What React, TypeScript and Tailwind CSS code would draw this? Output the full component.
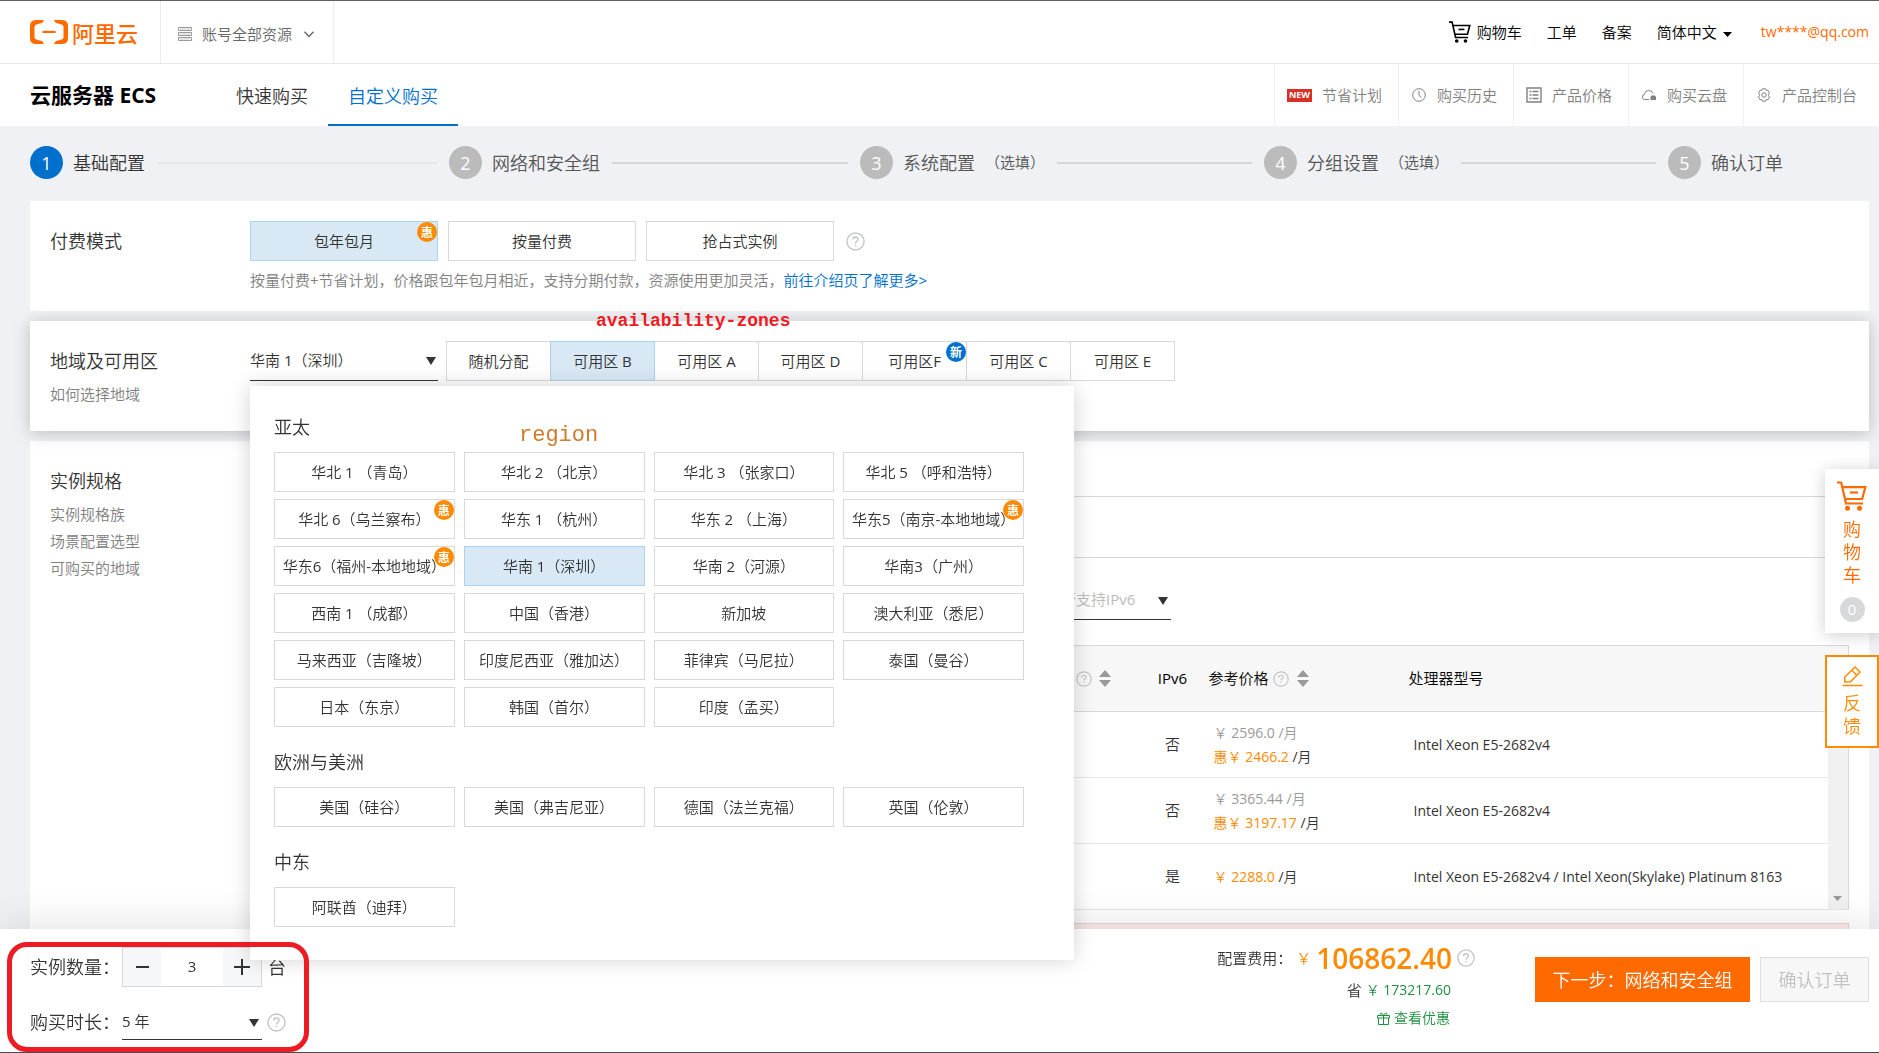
import { useState } from "react";
import type { ReactNode } from "react";

interface Option {
  label: string;
  badge?: string;
}

interface Step {
  label: string;
  optional?: boolean;
}

interface InstanceRow {
  ipv6: string;
  listPrice?: string;
  price: string;
  cpu: string;
}

const STEPS: Step[] = [
  { label: "基础配置" },
  { label: "网络和安全组" },
  { label: "系统配置", optional: true },
  { label: "分组设置", optional: true },
  { label: "确认订单" },
];

const PAY_MODES: Option[] = [{ label: "包年包月", badge: "惠" }, { label: "按量付费" }, { label: "抢占式实例" }];

const ZONES: Option[] = [
  { label: "随机分配" },
  { label: "可用区 B" },
  { label: "可用区 A" },
  { label: "可用区 D" },
  { label: "可用区F", badge: "新" },
  { label: "可用区 C" },
  { label: "可用区 E" },
];

const REGION_GROUPS: { title: string; regions: Option[] }[] = [
  {
    title: "亚太",
    regions: [
      { label: "华北 1 （青岛）" },
      { label: "华北 2 （北京）" },
      { label: "华北 3 （张家口）" },
      { label: "华北 5 （呼和浩特）" },
      { label: "华北 6（乌兰察布）", badge: "惠" },
      { label: "华东 1 （杭州）" },
      { label: "华东 2 （上海）" },
      { label: "华东5（南京-本地地域）", badge: "惠" },
      { label: "华东6（福州-本地地域）", badge: "惠" },
      { label: "华南 1（深圳）" },
      { label: "华南 2（河源）" },
      { label: "华南3（广州）" },
      { label: "西南 1 （成都）" },
      { label: "中国（香港）" },
      { label: "新加坡" },
      { label: "澳大利亚（悉尼）" },
      { label: "马来西亚（吉隆坡）" },
      { label: "印度尼西亚（雅加达）" },
      { label: "菲律宾（马尼拉）" },
      { label: "泰国（曼谷）" },
      { label: "日本（东京）" },
      { label: "韩国（首尔）" },
      { label: "印度（孟买）" },
    ],
  },
  {
    title: "欧洲与美洲",
    regions: [
      { label: "美国（硅谷）" },
      { label: "美国（弗吉尼亚）" },
      { label: "德国（法兰克福）" },
      { label: "英国（伦敦）" },
    ],
  },
  { title: "中东", regions: [{ label: "阿联酋（迪拜）" }] },
];

const ROWS: InstanceRow[] = [
  { ipv6: "否", listPrice: "2596.0", price: "2466.2", cpu: "Intel Xeon E5-2682v4" },
  { ipv6: "否", listPrice: "3365.44", price: "3197.17", cpu: "Intel Xeon E5-2682v4" },
  { ipv6: "是", price: "2288.0", cpu: "Intel Xeon E5-2682v4 / Intel Xeon(Skylake) Platinum 8163" },
];

function optionClass(active: boolean): string {
  return active ? "z-[1] border-[#add2ee] bg-[#d8e9f5]" : "border-[#d7d8d9] bg-white";
}

function CartIcon({ className }: { className: string }) {
  return (
    <svg viewBox="0 0 30 30" fill="none" stroke="currentColor" strokeWidth="2.2" className={className}>
      <path d="M0 1.5h4.2L9 22.5h17" />
      <path d="M5.5 6.2h22.8L25.2 18H8.5" />
      <path d="M13 11.5h8" />
      <circle cx="10.5" cy="27.3" r="2.5" fill="currentColor" stroke="none" />
      <circle cx="22.5" cy="27.3" r="2.5" fill="currentColor" stroke="none" />
    </svg>
  );
}

function HelpIcon({ className }: { className: string }) {
  return (
    <svg viewBox="0 0 20 20" fill="none" stroke="#c3c5c6" strokeWidth="1.5" className={className}>
      <circle cx="10" cy="10" r="9" />
      <path d="M7.3 8c0-1.7 1.1-2.7 2.7-2.7s2.7 1 2.7 2.5c0 2-2.7 2-2.7 4.2M10 13.4v1.5" />
    </svg>
  );
}

function Caret({ className }: { className: string }) {
  return (
    <svg viewBox="0 0 10 8" preserveAspectRatio="none" fill="currentColor" className={className}>
      <path d="M0 0h10L5 8z" />
    </svg>
  );
}

function SortIcon() {
  return (
    <svg viewBox="0 0 12 17" fill="#999" className="h-[17px] w-3">
      <path d="M0 7l6-7 6 7zM0 10h12l-6 7z" />
    </svg>
  );
}

function ServerIcon() {
  return (
    <svg viewBox="0 0 14 14" fill="none" stroke="#999" className="size-[14px]">
      <path d="M.5.5h13v3H.5zM.5 5.5h13v3H.5zM.5 10.5h13v3H.5z" />
      <path d="M2 2h10M2 7h10M2 12h10" stroke="#ccc" />
    </svg>
  );
}

function ClockIcon() {
  return (
    <svg viewBox="0 0 16 16" fill="none" stroke="currentColor" className="size-4">
      <circle cx="8" cy="8" r="6.3" />
      <path d="M8 4v4.3l2.4 2.2" />
    </svg>
  );
}

function ListIcon() {
  return (
    <svg viewBox="0 0 16 16" fill="none" stroke="currentColor" className="size-4">
      <path d="M1 1h14v14H1z" strokeWidth="1.4" />
      <path d="M3.5 4.5h2M3.5 8h2M3.5 11.5h2M6.5 4.5h6M6.5 8h6M6.5 11.5h6" strokeWidth="1.3" />
    </svg>
  );
}

function CloudDiskIcon() {
  return (
    <svg viewBox="0 0 16 16" fill="none" stroke="currentColor" className="size-4">
      <path d="M8 12.5H3.6a2.6 2.6 0 0 1-.2-5.1A4.4 4.4 0 0 1 12 6.6" />
      <path d="M9.5 10l1-1.5H14l1 1.5v3H9.5z" fill="currentColor" stroke="none" />
    </svg>
  );
}

function GearIcon() {
  return (
    <svg viewBox="0 0 16 16" fill="none" stroke="currentColor" className="size-4">
      <path d="M6.4 1.8h3.2l.6 1.6 1.7-.2 1.6 2.7-1 1.4v1.4l1 1.4-1.6 2.7-1.7-.2-.6 1.6H6.4l-.6-1.6-1.7.2-1.6-2.7 1-1.4V7.3l-1-1.4 1.6-2.7 1.7.2z" />
      <circle cx="8" cy="8" r="2.2" />
    </svg>
  );
}

function PencilIcon() {
  return (
    <svg viewBox="0 0 21 21" fill="none" stroke="currentColor" strokeWidth="1.5" className="size-[21px]">
      <path d="M2.8 16v-5L13 1l5 5-9.5 9.8zM9.8 4.2l5 5" />
      <path d="M.5 19.5h20" />
    </svg>
  );
}

function GiftIcon() {
  return (
    <svg viewBox="0 0 13 13" fill="none" stroke="currentColor" className="size-[13px]">
      <path d="M.5 3.5h12V6H.5zM1.5 6v6.5h10V6M6.5 3.5v9" />
      <path d="M6.5 3.5C5 0 2 1 3.5 3.5M6.5 3.5C8 0 11 1 9.5 3.5" />
    </svg>
  );
}

function Badge({ children }: { children: string }) {
  return (
    <span
      className={`absolute top-0 right-0 flex size-5 items-center justify-center rounded-full font-['Noto_Sans_CJK_SC',sans-serif] text-xs leading-none font-bold text-white ${
        children === "新" ? "bg-[#0070cc]" : "bg-[#ff8a00]"
      }`}
    >
      {children}
    </span>
  );
}

function ToolLink({ icon, children }: { icon: ReactNode; children: ReactNode }) {
  return (
    <a href="#" className="flex items-center gap-[10px] border-l border-[#f0f0f0] pr-4 pl-3 text-[15px] text-[#808080]">
      {icon}
      {children}
    </a>
  );
}

function Header() {
  return (
    <header className="flex h-16 border-t border-b border-t-[#5f5f66] border-b-[#e8e8e8] bg-white text-[15px]">
      <a href="#" className="flex w-[161px] items-center gap-1 border-r border-[#ebebeb] pl-[30px] text-[#ff6a00]">
        <svg viewBox="0 0 38 24" fill="currentColor" className="h-6 w-[38px]">
          <path d="M14 0H6Q0 0 0 6v12q0 6 6 6h8l-1.6-2.7-6-1.8Q4.5 19 4.5 17V7q0-2 1.9-2.5l6-1.8z" />
          <path d="M24 0h8q6 0 6 6v12q0 6-6 6h-8l1.6-2.7 6-1.8q1.9-.5 1.9-2.5V7q0-2-1.9-2.5l-6-1.8z" />
          <path d="M12.5 10.8h13V13h-13z" />
        </svg>
        <span className="font-['Noto_Sans_CJK_SC',sans-serif] text-[22px] leading-6 font-medium">阿里云</span>
      </a>
      <button type="button" className="flex w-[173px] items-center gap-[10px] border-r border-[#ebebeb] pt-1 pl-[17px] text-[#666]">
        <ServerIcon />
        账号全部资源
        <svg viewBox="0 0 10 7" fill="none" stroke="currentColor" strokeWidth="1.3" className="ml-[2px] h-[7px] w-[10px]">
          <path d="M.5.8L5 5.5 9.5.8" />
        </svg>
      </button>
      <nav className="ml-auto flex items-center gap-[25px] pr-[10px] text-black">
        <a href="#" className="flex items-center gap-[6px]">
          <CartIcon className="size-[22px]" />
          购物车
        </a>
        <a href="#">工单</a>
        <a href="#">备案</a>
        <button type="button" className="flex items-center gap-[6px]">
          简体中文
          <Caret className="mt-1 h-[5px] w-[9px]" />
        </button>
        <a href="#" className="ml-1 text-sm text-[#ff6a00]">tw****@qq.com</a>
      </nav>
    </header>
  );
}

function ProductBar() {
  return (
    <div className="flex h-[62px] bg-white">
      <h1 className="flex w-[216px] items-center pt-[2px] pl-[30px] font-['Open_Sans','Noto_Sans_CJK_SC',sans-serif] text-[21px] font-bold text-black">
        云服务器 ECS
      </h1>
      <nav className="flex text-lg text-[#333]">
        <a href="#" className="flex items-center px-5 pt-[2px]">快速购买</a>
        <a href="#" className="flex items-center border-b-2 border-[#0070cc] px-5 pt-1 text-[#0070cc]">自定义购买</a>
      </nav>
      <div className="ml-auto flex pr-[6px]">
        <ToolLink
          icon={
            <span className="flex h-[13px] w-[25px] items-center justify-center bg-[#d93026] text-[9px] font-bold text-white">NEW</span>
          }
        >
          节省计划
        </ToolLink>
        <ToolLink icon={<ClockIcon />}>购买历史</ToolLink>
        <ToolLink icon={<ListIcon />}>产品价格</ToolLink>
        <ToolLink icon={<CloudDiskIcon />}>购买云盘</ToolLink>
        <ToolLink icon={<GearIcon />}>产品控制台</ToolLink>
      </div>
    </div>
  );
}

function Steps() {
  return (
    <ol className="grid h-[75px] grid-cols-[419fr_411fr_404fr_404fr_201fr] items-center pr-[10px] pb-[2px] pl-[30px] text-lg text-[#555]">
      {STEPS.map((step, i) => (
        <li key={step.label} className="flex items-center">
          <span
            className={`flex size-[33px] shrink-0 items-center justify-center rounded-full text-lg text-white ${
              i === 0 ? "bg-[#0070cc]" : "bg-[#bbb]"
            }`}
          >
            {i + 1}
          </span>
          <span className={`ml-[10px] shrink-0 ${i === 0 ? "text-[#333]" : ""}`}>{step.label}</span>
          {step.optional && <span className="ml-[10px] shrink-0 text-[15px]">（选填）</span>}
          {i < STEPS.length - 1 && <span className={`mx-3 h-[2px] flex-1 ${i === 0 ? "bg-[#e6e7e8]" : "bg-[#d5d6d8]"}`} />}
        </li>
      ))}
    </ol>
  );
}

function SectionLabel({ title, links = [] }: { title: string; links?: string[] }) {
  return (
    <div className="flex w-[200px] shrink-0 flex-col items-start text-[15px] text-[#808080]">
      <h2 className="text-lg leading-10 text-[#333]">{title}</h2>
      {links.map((link) => (
        <a key={link} href="#" className="leading-[27px]">{link}</a>
      ))}
    </div>
  );
}

function RegionPopup({ region, onSelect }: { region: string; onSelect: (label: string) => void }) {
  return (
    <div className="absolute top-[45px] left-0 z-20 flex w-[824px] flex-col gap-[10px] bg-white pt-4 pr-[50px] pb-[33px] pl-6 shadow-[0_0_20px_rgba(0,0,0,0.18)]">
      {REGION_GROUPS.map((group) => (
        <section key={group.title}>
          <h3 className="text-lg leading-[50px] text-[#333]">{group.title}</h3>
          <div className="grid grid-cols-4 gap-x-[9px] gap-y-[7px]">
            {group.regions.map((item) => (
              <button
                key={item.label}
                type="button"
                onClick={() => onSelect(item.label)}
                className={`relative h-10 border whitespace-nowrap ${optionClass(item.label === region)}`}
              >
                {item.label}
                {item.badge && <Badge>{item.badge}</Badge>}
              </button>
            ))}
          </div>
        </section>
      ))}
      <span className="absolute top-9 left-[269px] font-['Liberation_Mono',monospace] text-[22px] leading-7 text-[#d07a2d]">
        region
      </span>
    </div>
  );
}

function InstanceTable() {
  return (
    <table className="w-full border border-[#d7d8d9] bg-white text-left">
      <thead>
        <tr className="h-[66px] border-b border-[#d7d8d9] bg-[#f7f7f7] text-black">
          <th className="font-normal">
            <span className="flex items-center justify-end gap-[7px] pr-9">
              <HelpIcon className="size-4" />
              <SortIcon />
            </span>
          </th>
          <th className="w-[52px] text-center font-normal">IPv6</th>
          <th className="w-[200px] font-normal">
            <span className="flex items-center pl-[10px]">
              参考价格
              <HelpIcon className="mr-2 ml-1 size-4" />
              <SortIcon />
            </span>
          </th>
          <th className="w-[429px] pl-[10px] font-normal">处理器型号</th>
          <th className="w-[21px]" />
        </tr>
      </thead>
      <tbody>
        {ROWS.map((row, i) => (
          <tr key={row.price} className="h-[66px] border-b border-[#e5e6e7]">
            <td />
            <td className="text-center">{row.ipv6}</td>
            <td className="pl-[15px] text-sm leading-6">
              {row.listPrice && <div className="text-[#999]">￥ {row.listPrice} /月</div>}
              <div>
                <span className="text-[#ff8a00]">
                  {row.listPrice && "惠"}￥ {row.price}
                </span>{" "}
                /月
              </div>
            </td>
            <td className="pl-[15px] text-sm">{row.cpu}</td>
            {i === 0 && (
              <td rowSpan={ROWS.length} className="bg-[#f1f1f1] pb-2 pl-[5px] align-bottom text-[#999]">
                <Caret className="h-[5px] w-[9px]" />
              </td>
            )}
          </tr>
        ))}
      </tbody>
    </table>
  );
}

function SideTools() {
  return (
    <aside className="fixed top-[469px] right-0 z-10 flex w-[54px] flex-col gap-[22px] text-lg leading-[23px]">
      <button type="button" className="flex flex-col items-center bg-white pt-3 pb-[11px] text-[#ff6a00] shadow-[0_2px_16px_rgba(0,0,0,0.2)]">
        <CartIcon className="mb-[7px] size-[30px]" />
        <span className="w-[18px]">购物车</span>
        <span className="mt-[10px] flex size-[25px] items-center justify-center rounded-full bg-[#d7d8d9] text-[15px] text-white">0</span>
      </button>
      <button type="button" className="flex flex-col items-center border-2 border-[#ff8a00] bg-white pt-[9px] pb-2 text-[#ff8a00]">
        <PencilIcon />
        <span className="mt-[5px] w-[18px]">反馈</span>
      </button>
    </aside>
  );
}

function OrderBar() {
  const [count, setCount] = useState(3);

  return (
    <footer className="fixed inset-x-0 bottom-0 z-10 flex h-[124px] border-b border-[#4a4a4f] bg-white pr-[10px] pl-[30px] text-[#333] shadow-[0_-2px_40px_rgba(0,0,0,0.12)]">
      <div className="flex flex-col gap-[15px] pt-[18px] text-lg">
        <div className="flex h-10 items-center">
          <label htmlFor="count" className="w-[92px]">实例数量：</label>
          <div className="flex h-10 w-[140px] border border-[#d7d8d9]">
            <button type="button" aria-label="减少" onClick={() => setCount(count - 1)} className="flex w-[38px] items-center justify-center bg-[#f5f7f9]">
              <span className="h-[2px] w-[13px] bg-[#333]" />
            </button>
            <input
              id="count"
              value={count}
              onChange={(e) => setCount(Number(e.target.value))}
              className="w-0 flex-1 text-center text-[15px] outline-none"
            />
            <button type="button" aria-label="增加" onClick={() => setCount(count + 1)} className="flex w-[38px] items-center justify-center bg-[#f5f7f9]">
              <svg viewBox="0 0 16 16" stroke="#333" strokeWidth="2" className="size-4">
                <path d="M0 8h16M8 0v16" />
              </svg>
            </button>
          </div>
          <span className="ml-[6px]">台</span>
        </div>
        <div className="flex h-10 items-center">
          <label htmlFor="duration" className="w-[92px]">购买时长：</label>
          <div className="relative w-[140px]">
            <select id="duration" className="h-9 w-full appearance-none border-b border-[#333] text-[15px] outline-none">
              <option>5 年</option>
            </select>
            <Caret className="pointer-events-none absolute top-[15px] right-[3px] h-2 w-[10px]" />
          </div>
          <HelpIcon className="ml-[5px] size-[19px]" />
        </div>
      </div>

      <div className="ml-auto flex flex-col items-end pt-[11px]">
        <div className="flex h-9 items-center text-[15px]">
          配置费用：
          <span className="ml-1 text-[#ff8a00]">￥</span>
          <strong className="mx-[5px] text-[28px] leading-9 font-semibold text-[#ff8a00]">106862.40</strong>
          <HelpIcon className="size-[18px]" />
        </div>
        <div className="mr-6 flex h-7 items-center text-[15px]">
          省<span className="ml-1 text-sm text-[#1e9141]">￥ 173217.60</span>
        </div>
        <a href="#" className="mr-[25px] flex h-7 items-center gap-1 text-sm text-[#1e9141]">
          <GiftIcon />
          查看优惠
        </a>
      </div>

      <div className="ml-[60px] flex gap-[10px] pt-7 text-lg">
        <button type="button" className="h-[45px] w-[215px] bg-[#ff6a00] text-white">下一步：网络和安全组</button>
        <button type="button" disabled className="h-[45px] w-[109px] border border-[#dedede] bg-[#f7f7f7] text-[#c1c1c1]">确认订单</button>
      </div>
    </footer>
  );
}

export default function App() {
  const [payMode, setPayMode] = useState("包年包月");
  const [zone, setZone] = useState("可用区 B");
  const [region, setRegion] = useState("华南 1（深圳）");

  return (
    <div className="h-screen overflow-hidden bg-[#eff1f5] font-['Open_Sans','Noto_Sans_CJK_SC_DemiLight','Noto_Sans_CJK_SC',sans-serif] text-[15px] text-[#333]">
      <Header />
      <ProductBar />
      <Steps />

      <main className="flex flex-col gap-[10px] pr-[10px] pl-[30px]">
        <section className="flex bg-white p-5">
          <SectionLabel title="付费模式" />
          <div>
            <div className="flex items-center gap-[10px]">
              {PAY_MODES.map((mode) => (
                <button
                  key={mode.label}
                  type="button"
                  onClick={() => setPayMode(mode.label)}
                  className={`relative h-10 w-[188px] border ${optionClass(mode.label === payMode)}`}
                >
                  {mode.label}
                  {mode.badge && <Badge>{mode.badge}</Badge>}
                </button>
              ))}
              <HelpIcon className="ml-[2px] size-[19px]" />
            </div>
            <p className="mt-[9px] mb-px leading-5 text-[#808080]">
              按量付费+节省计划，价格跟包年包月相近，支持分期付款，资源使用更加灵活，
              <a href="#" className="text-[#0070cc]">前往介绍页了解更多&gt;</a>
            </p>
          </div>
        </section>

        <section className="relative flex bg-white px-5 pt-5 pb-[23px] shadow-[0_2px_16px_rgba(0,0,0,0.22)]">
          <SectionLabel title="地域及可用区" links={["如何选择地域"]} />
          <div className="relative flex h-10 gap-2">
            <div className="relative w-[188px]">
              <select
                aria-label="地域"
                value={region}
                onChange={(e) => setRegion(e.target.value)}
                className="h-10 w-full appearance-none border-b border-[#333] outline-none"
              >
                {REGION_GROUPS.map((group) =>
                  group.regions.map((item) => <option key={item.label}>{item.label}</option>)
                )}
              </select>
              <Caret className="pointer-events-none absolute top-4 right-[2px] h-2 w-[10px]" />
            </div>
            <div className="flex pl-px">
              {ZONES.map((item) => (
                <button
                  key={item.label}
                  type="button"
                  onClick={() => setZone(item.label)}
                  className={`relative -ml-px h-10 w-[105px] border ${optionClass(item.label === zone)}`}
                >
                  {item.label}
                  {item.badge && <Badge>{item.badge}</Badge>}
                </button>
              ))}
            </div>
            <RegionPopup region={region} onSelect={setRegion} />
            <span className="absolute -top-8 left-[346px] font-['Liberation_Mono',monospace] text-lg leading-6 font-bold text-[#ed1c24]">
              availability-zones
            </span>
          </div>
        </section>

        <section className="flex bg-white p-5">
          <SectionLabel title="实例规格" links={["实例规格族", "场景配置选型", "可购买的地域"]} />
          <div className="flex-1">
            <div className="h-9 border-b border-[#d7d8d9]" />
            <div className="h-[61px] border-b border-[#d7d8d9]" />
            <div className="relative mt-[22px] ml-[796px] w-[125px]">
              <select aria-label="IPv6" className="h-10 w-full appearance-none border-b border-[#333] text-[#bbb] outline-none">
                <option>是否支持IPv6</option>
              </select>
              <Caret className="pointer-events-none absolute top-[17px] right-[3px] h-2 w-[10px]" />
            </div>
            <div className="mt-[25px]">
              <InstanceTable />
            </div>
            <div className="mt-[13px] h-10 border border-[#f3d3d0] bg-[#fceceb]" />
          </div>
        </section>
      </main>

      <SideTools />
      <OrderBar />
      <div className="pointer-events-none fixed bottom-px left-[7px] z-30 h-[110px] w-[302px] rounded-[20px] border-[5px] border-[#ed1c24]" />
    </div>
  );
}
